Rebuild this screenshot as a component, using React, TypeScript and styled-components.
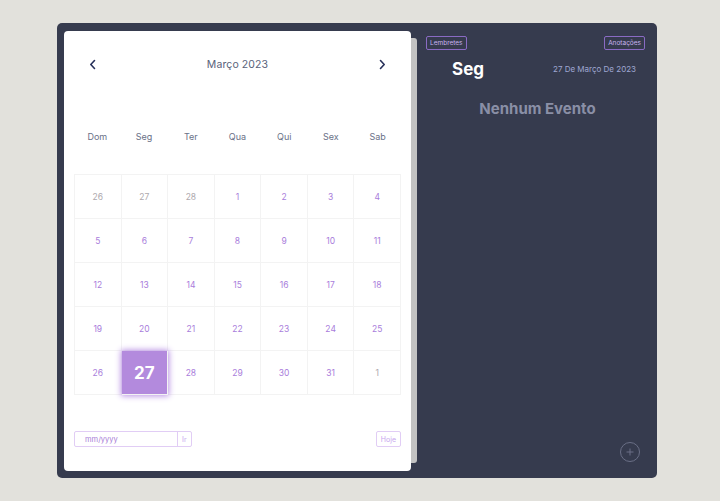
import React, { useMemo, useState } from 'react';
import styled, { createGlobalStyle } from 'styled-components';

const GlobalStyle = createGlobalStyle`
	html, body {
		margin: 0;
		padding: 0;
		background: #e2e1dc;
		font-family: Inter, 'Open Sans', sans-serif;
	}
	* {
		box-sizing: border-box;
	}
`;

const Page = styled.div`
	padding: 23px 0 0 57px;
	height: 501px;
`;

const Shell = styled.div`
	width: 600px;
	height: 455px;
	background: #363b4e;
	border-radius: 5px;
	padding: 8px 0 7px 7px;
	display: flex;
`;

const CalendarCard = styled.div`
	width: 347px;
	height: 440px;
	background: #fff;
	border-radius: 4px;
	padding: 0 10px;
	display: flex;
	flex-direction: column;
`;

const PageEdge = styled.div`
	width: 6px;
	margin: 7px 0 8px 0;
	background: #c3c3c3;
	border-radius: 0 3px 3px 0;
`;

const CalendarHeader = styled.div`
	display: flex;
	justify-content: space-between;
	align-items: center;
	height: 18px;
	margin-top: 24px;
	padding: 0 13px 0 13px;
`;

const ArrowBtn = styled.button`
	border: none;
	background: transparent;
	padding: 0;
	width: 10px;
	height: 14px;
	display: flex;
	align-items: center;
	justify-content: center;
	cursor: pointer;
`;

const MonthTitle = styled.div`
	font-size: 10.5px;
	color: #59627a;
	letter-spacing: 0.1px;
`;

const WeekRow = styled.div`
	display: grid;
	grid-template-columns: repeat(7, 1fr);
	margin-top: 54px;
	height: 18px;
	align-items: center;
`;

const WeekDay = styled.div`
	text-align: center;
	font-size: 9px;
	color: #6a7187;
`;

const DayGrid = styled.div`
	display: grid;
	grid-template-columns: repeat(7, 1fr);
	grid-auto-rows: 44px;
	margin-top: 29px;
	border-top: 1px solid #f3f3f3;
	border-left: 1px solid #f3f3f3;
`;

const DayCell = styled.button<{ $muted?: boolean; $selected?: boolean }>`
	border: none;
	border-right: 1px solid #f3f3f3;
	border-bottom: 1px solid #f3f3f3;
	background: ${(p) => (p.$selected ? '#b38add' : 'transparent')};
	color: ${(p) => (p.$selected ? '#fff' : p.$muted ? '#aea9ad' : '#a97ddb')};
	font-family: inherit;
	font-size: ${(p) => (p.$selected ? '17px' : '8.5px')};
	font-weight: ${(p) => (p.$selected ? 700 : 400)};
	box-shadow: ${(p) => (p.$selected ? '0 0 6px 1px #b890e4' : 'none')};
	position: relative;
	z-index: ${(p) => (p.$selected ? 1 : 0)};
	padding: 0;
	cursor: pointer;
`;

const Footer = styled.div`
	display: flex;
	justify-content: space-between;
	align-items: center;
	margin-top: 36px;
`;

const GotoGroup = styled.div`
	display: flex;
	height: 16px;
	border: 1px solid #e1cdf5;
	border-radius: 2px;
`;

const GotoInput = styled.input`
	width: 102px;
	border: none;
	outline: none;
	padding: 0 0 0 10px;
	font-family: inherit;
	font-size: 7.5px;
	color: #a77dd6;
	background: transparent;

	&::placeholder {
		color: #a77dd6;
	}
`;

const SmallBtn = styled.button<{ $bordered?: boolean }>`
	border: ${(p) => (p.$bordered ? '1px solid #e1cdf5' : 'none')};
	border-left: 1px solid #e1cdf5;
	border-radius: ${(p) => (p.$bordered ? '2px' : '0')};
	background: transparent;
	color: #c7a6ee;
	font-family: inherit;
	font-size: 7px;
	padding: 0 4px;
	height: ${(p) => (p.$bordered ? '16px' : 'auto')};
	cursor: pointer;
`;

const SidePanel = styled.div`
	flex: 1;
	display: flex;
	flex-direction: column;
	padding: 5px 12px 0 9px;
	position: relative;
`;

const TopBar = styled.div`
	display: flex;
	justify-content: space-between;
`;

const TagBtn = styled.button`
	border: 1px solid #8a6bc4;
	border-radius: 2px;
	background: transparent;
	color: #c6b3f0;
	font-family: inherit;
	font-size: 6.5px;
	height: 14px;
	padding: 0 3px;
	cursor: pointer;
`;

const DayInfo = styled.div`
	display: flex;
	justify-content: space-between;
	align-items: center;
	margin-top: 9px;
	padding: 0 9px 0 26px;
`;

const DayName = styled.div`
	font-size: 17px;
	font-weight: 700;
	color: #fff;
`;

const FullDate = styled.div`
	font-size: 8px;
	color: #9fa7d2;
`;

const EmptyText = styled.div`
	text-align: center;
	font-size: 15px;
	font-weight: 700;
	color: #8a8fa6;
	margin-top: 20px;
	padding-left: 4px;
`;

const AddBtn = styled.button`
	position: absolute;
	right: 17px;
	bottom: 9px;
	width: 20px;
	height: 20px;
	border-radius: 50%;
	border: 1px solid #6a6f86;
	background: transparent;
	color: #6a6f86;
	padding: 0;
	display: flex;
	align-items: center;
	justify-content: center;
	cursor: pointer;
`;

const Chevron = ({ dir }: { dir: 'left' | 'right' }) => (
	<svg width="7" height="11" viewBox="0 0 7 11">
		<path
			d={dir === 'left' ? 'M5.5 1.5 L1.8 5.5 L5.5 9.5' : 'M1.5 1.5 L5.2 5.5 L1.5 9.5'}
			fill="none"
			stroke="#27305a"
			strokeWidth="1.6"
			strokeLinecap="round"
			strokeLinejoin="round"
		/>
	</svg>
);

const WEEKDAYS = ['Dom', 'Seg', 'Ter', 'Qua', 'Qui', 'Sex', 'Sab'];

type Day = { n: number; muted: boolean };

const buildMonth = (): Day[] => {
	const days: Day[] = [26, 27, 28].map((n) => ({ n, muted: true }));
	for (let i = 1; i <= 31; i++) days.push({ n: i, muted: false });
	days.push({ n: 1, muted: true });
	return days;
};

export default function App() {
	const [selected, setSelected] = useState(27);
	const days = useMemo(buildMonth, []);

	return (
		<>
			<GlobalStyle />
			<Page>
				<Shell>
					<CalendarCard>
						<CalendarHeader>
							<ArrowBtn>
								<Chevron dir="left" />
							</ArrowBtn>
							<MonthTitle>Março 2023</MonthTitle>
							<ArrowBtn>
								<Chevron dir="right" />
							</ArrowBtn>
						</CalendarHeader>

						<WeekRow>
							{WEEKDAYS.map((d) => (
								<WeekDay key={d}>{d}</WeekDay>
							))}
						</WeekRow>

						<DayGrid>
							{days.map((d, i) => (
								<DayCell
									key={i}
									$muted={d.muted}
									$selected={!d.muted && d.n === selected}
									onClick={() => !d.muted && setSelected(d.n)}
								>
									{d.n}
								</DayCell>
							))}
						</DayGrid>

						<Footer>
							<GotoGroup>
								<GotoInput placeholder="mm/yyyy" />
								<SmallBtn>Ir</SmallBtn>
							</GotoGroup>
							<SmallBtn $bordered>Hoje</SmallBtn>
						</Footer>
					</CalendarCard>
					<PageEdge />

					<SidePanel>
						<TopBar>
							<TagBtn>Lembretes</TagBtn>
							<TagBtn>Anotações</TagBtn>
						</TopBar>
						<DayInfo>
							<DayName>Seg</DayName>
							<FullDate>27 De Março De 2023</FullDate>
						</DayInfo>
						<EmptyText>Nenhum Evento</EmptyText>
						<AddBtn>
							<svg width="8" height="8" viewBox="0 0 8 8">
								<path d="M4 0.5 V7.5 M0.5 4 H7.5" stroke="#6a6f86" strokeWidth="1" />
							</svg>
						</AddBtn>
					</SidePanel>
				</Shell>
			</Page>
		</>
	);
}
